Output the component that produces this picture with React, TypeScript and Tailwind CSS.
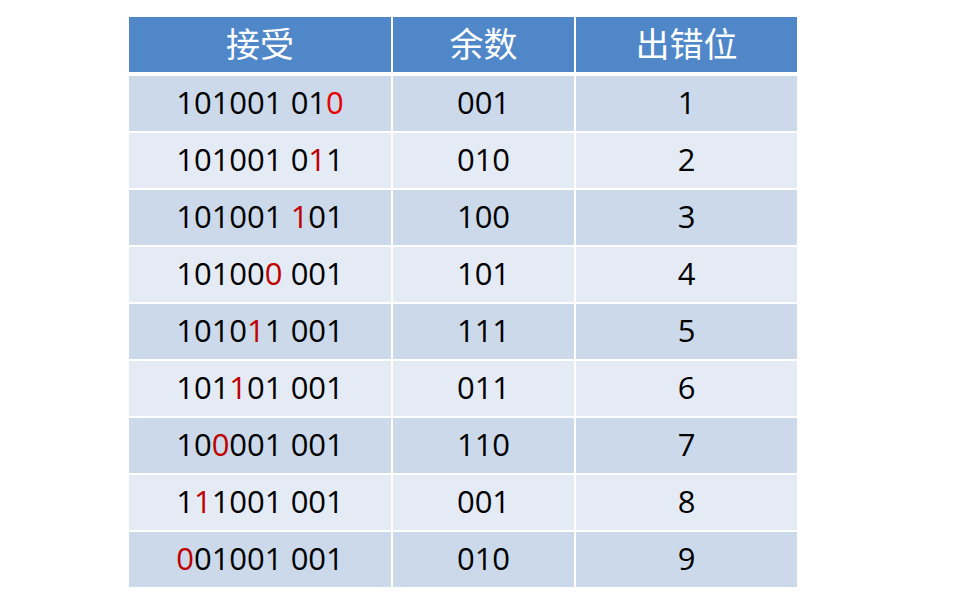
import React from "react";

// received word, with index of the flipped bit (char index in the string)
const rows: { word: string; bad: number; rem: string; pos: string; red: string }[] = [
  { word: "101001 010", bad: 9, rem: "001", pos: "1", red: "text-[#e60000]" },
  { word: "101001 011", bad: 8, rem: "010", pos: "2", red: "text-[#c00000]" },
  { word: "101001 101", bad: 7, rem: "100", pos: "3", red: "text-[#c00000]" },
  { word: "101000 001", bad: 5, rem: "101", pos: "4", red: "text-[#c00000]" },
  { word: "101011 001", bad: 4, rem: "111", pos: "5", red: "text-[#c00000]" },
  { word: "101101 001", bad: 3, rem: "011", pos: "6", red: "text-[#c00000]" },
  { word: "100001 001", bad: 2, rem: "110", pos: "7", red: "text-[#c00000]" },
  { word: "111001 001", bad: 1, rem: "001", pos: "8", red: "text-[#c00000]" },
  { word: "001001 001", bad: 0, rem: "010", pos: "9", red: "text-[#c00000]" },
];

const grid = "grid grid-cols-[262px_181px_221px] gap-x-[2px]";
const cell = "flex items-center justify-center";

export default function App() {
  return (
    <div className="h-[608px] w-[964px] bg-white pl-[129px] pt-[17px] font-['Open_Sans',sans-serif] text-black">
      <div className="flex w-[668px] flex-col">
        {/* header */}
        <div className={`${grid} h-[54px] font-['Noto_Sans_CJK_SC',sans-serif] text-[34px] text-white`}>
          <div className={`${cell} bg-[#4f87c9] pb-[4px]`}>接受</div>
          <div className={`${cell} bg-[#4f87c9] pb-[4px]`}>余数</div>
          <div className={`${cell} bg-[#4f87c9] pb-[4px]`}>出错位</div>
        </div>

        <div className="mt-[5px] flex flex-col gap-y-[2px]">
          {rows.map((r, i) => {
            const bg = i % 2 === 0 ? "bg-[#cbd9ea]" : "bg-[#e5ebf5]";
            return (
              <div key={r.pos} className={`${grid} h-[55px] text-[31px]`}>
                <div className={`${cell} ${bg} pb-[3px]`}>
                  {r.word.split("").map((ch, j) =>
                    ch === " " ? (
                      <span key={j}>&nbsp;</span>
                    ) : (
                      <span key={j} className={j === r.bad ? r.red : ""}>
                        {ch}
                      </span>
                    )
                  )}
                </div>
                <div className={`${cell} ${bg} pb-[3px]`}>{r.rem}</div>
                <div className={`${cell} ${bg} pb-[3px]`}>{r.pos}</div>
              </div>
            );
          })}
        </div>
      </div>
    </div>
  );
}
